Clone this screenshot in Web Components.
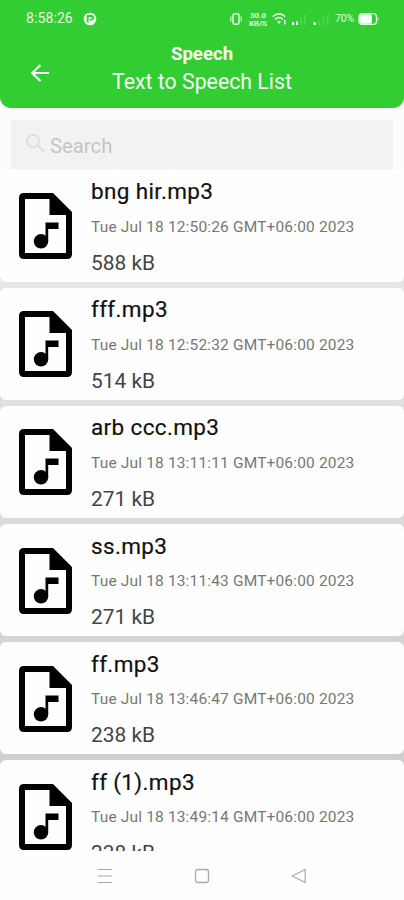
<!DOCTYPE html>
<html lang="en"><head><meta charset="utf-8"><title>Text to Speech List</title>
<style>
html,body{margin:0;height:100%}
body{font-family:Roboto,"Noto Sans",sans-serif;background:#fdfbfd;overflow:hidden}
</style></head><body>
<speech-app></speech-app>
<script>
const define=(name,html,init)=>customElements.define(name,class extends HTMLElement{
  constructor(){super();this.attachShadow({mode:'open'}).innerHTML=html;}
  connectedCallback(){if(init)init(this,this.shadowRoot);}
});

define('status-bar',`<style>
:host{display:flex;height:37px;box-sizing:border-box;padding:0 24px 0 26px;align-items:center;color:#e6fbe4}
svg{display:block;flex:none}
.time{font-size:14px;letter-spacing:.1px;width:57px;line-height:15px}
.sp{flex:1}
.rate{display:flex;flex-direction:column;font-size:8px;font-weight:700;width:20px;text-align:center;margin:0 4px 0 5px}
.rate span{line-height:9px;height:8px}
.pct{font-size:10.500px;letter-spacing:-.2px;margin:0 2px 0 2px;width:21px}
</style>
<span class="time">8:58:26</span>
<svg width="14" height="14" viewBox="0 0 14 14"><circle cx="7" cy="7" r="6.3" fill="#f0fff0"/><path d="M4.7 10.5V4h3.6a1.7 1.7 0 0 1 0 3.6H7" fill="none" stroke="#32cd32" stroke-width="1.8"/></svg>
<span class="sp"></span>
<svg width="14" height="14" viewBox="0 0 14 14"><rect x="4" y="1.8" width="6" height="10.4" rx="1.6" fill="none" stroke="#e6fbe4" stroke-width="1.5"/><path d="M1.800 4.500v5M12.200 4.500v5" stroke="#c4f4c2" stroke-width="1.300"/></svg>
<span class="rate"><span>30.0</span><span>KB/S</span></span>
<svg width="15" height="14" viewBox="0 0 15 14" fill="none" stroke="#e6fbe4" stroke-width="1.6"><path d="M.8 4.6Q7 -.8 13.2 4.6M3 7.3Q7 4 11 7.3"/><path d="M5 9.3Q7 8 9 9.3L7 12z" fill="#e6fbe4" stroke="none"/><path d="M12.8 8v4.5"/></svg>
<svg width="46" height="14" viewBox="0 0 46 14"><path d="M5 10h2.200v3H5zM9 9.500h2v3.500H9zM26.500 10h2.200v3h-2.200z" fill="#e6fbe4"/><path d="M13 5h2v8h-2zM17 2.500h2v10.500h-2zM31 8.500h2v4.500h-2zM35.500 5h2v8h-2zM39.500 2.500h2v10.500h-2z" fill="#4cd44c"/></svg>
<span class="pct">70%</span>
<svg width="22" height="14" viewBox="0 0 22 14"><rect x="1" y="1.700" width="17.500" height="10.600" rx="3" fill="none" stroke="#dcf9da" stroke-width="1.300"/><rect x="1.500" y="2.200" width="12.500" height="9.600" rx="2" fill="#f4fff4"/><path d="M19.500 5q2.500 2 0 4z" fill="#dcf9da"/></svg>`);

define('app-header',`<style>
:host{display:block;height:108px;background:#32cd32;border-radius:0 0 11px 11px;color:#f6fff4;flex:none}
.bar{display:grid;grid-template-columns:58px 1fr 58px;height:71px;align-items:center}
svg{margin-left:29px;display:block}
.t{text-align:center;white-space:nowrap;padding-bottom:5px}
.a{font-size:18.600px;font-weight:700;line-height:28px}
.b{font-size:21.300px;line-height:27px;padding-bottom:6px}
</style><status-bar></status-bar>
<div class="bar"><svg width="22" height="20" viewBox="0 0 22 20" fill="none" stroke="#f6fff4" stroke-width="2.200"><path d="M20 10H3M11.500 2L3.200 10l8.300 8"/></svg>
<div class="t"><div class="a">Speech</div><div class="b">Text to Speech List</div></div></div>`);

define('search-field',`<style>
:host{display:flex;flex:none;box-sizing:border-box;height:49px;margin:12px 11px 0;background:#f2f2f2;align-items:center;color:#c5c5c5;padding:3px 0 0 14px;font-size:20.300px}
svg{margin:-5px 4px 0 0}
</style><svg width="21" height="21" viewBox="0 0 21 21" fill="none" stroke="#dedede" stroke-width="1.900"><circle cx="8" cy="8" r="6"/><path d="M12.500 12.500l6.500 6"/></svg><slot></slot>`);

define('file-card',`<style>
:host{display:flex;height:112px;flex:none;background:#fefefe;border-radius:6px;color:#111;white-space:nowrap}
svg{flex:none;margin:23.500px 19px 0 19px}
.n{font-size:22.500px;letter-spacing:.36px;line-height:28px;-webkit-text-stroke:.2px #111;padding-top:7.500px;height:28px}
.d{font-size:15.500px;letter-spacing:.16px;line-height:20px;color:#777;padding-top:11.500px}
.s{font-size:20.900px;line-height:28px;color:#444;padding-top:12px}
</style><svg width="53" height="66" viewBox="0 0 53 66"><path fill="#000" fill-rule="evenodd" d="M5 0H34L53 19V61Q53 66 48 66H5Q0 66 0 61V5Q0 0 5 0ZM6 6V60H47V22H30.500V6Z"/><circle cx="22" cy="48.300" r="7.200"/><path d="M26.500 29.500H39.500V36H29.200V48.300H26.500Z"/></svg>
<div><div class="n"></div><div class="d"></div><div class="s"></div></div>`,(h,r)=>{
  r.querySelector('.n').textContent=h.getAttribute('name');
  r.querySelector('.d').textContent=h.getAttribute('date');
  r.querySelector('.s').textContent=h.getAttribute('size');
});

define('file-list',`<style>
:host{display:flex;flex-direction:column;gap:6.100px;flex:1;min-height:0;box-sizing:border-box;padding-top:.8px;overflow:hidden;background:linear-gradient(#fdfbfd 1%,#e9e7e9 2%,#e6e6e6 17%,#cfcfcf 86%)}
</style><slot></slot>`);

define('nav-bar',`<style>
:host{display:flex;justify-content:center;align-items:center;gap:81px;height:49px;box-sizing:border-box;flex:none;background:#fefefe}
</style>
<svg width="16" height="16" viewBox="0 0 16 16" stroke="#aaa" stroke-width="1.200"><path d="M1 1.500h14M1 8h14M1 14.500h14"/></svg>
<svg width="16" height="16" viewBox="0 0 16 16" fill="none" stroke="#aaa" stroke-width="1.300"><rect x="1.500" y="1.500" width="13" height="13" rx="2.500"/></svg>
<svg width="16" height="16" viewBox="0 0 16 16" fill="none" stroke="#aaa" stroke-width="1.200" stroke-linejoin="round"><path d="M1.200 8L14.200 1.500v13z"/></svg>`);

const files=[['bng hir.mp3','12:50:26','588 kB'],['fff.mp3','12:52:32','514 kB'],['arb ccc.mp3','13:11:11','271 kB'],['ss.mp3','13:11:43','271 kB'],['ff.mp3','13:46:47','238 kB'],['ff (1).mp3','13:49:14','238 kB']];
define('speech-app',`<style>:host{display:flex;flex-direction:column;width:404px;height:900px;overflow:hidden}</style>
<app-header></app-header><search-field>Search</search-field>
<file-list>${files.map(f=>`<file-card name="${f[0]}" date="Tue Jul 18 ${f[1]} GMT+06:00 2023" size="${f[2]}"></file-card>`).join('')}</file-list><nav-bar></nav-bar>`);
</script></body></html>
